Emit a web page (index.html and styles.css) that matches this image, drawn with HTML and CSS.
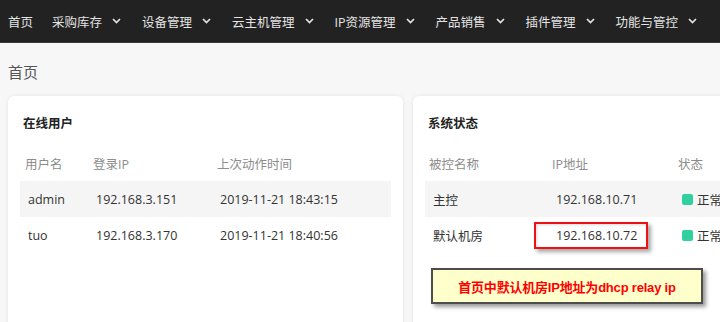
FILE: index.html
```html
<!DOCTYPE html>
<html lang="zh-CN">
<head>
  <meta charset="UTF-8">
  <title>首页</title>
  <link rel="stylesheet" href="styles.css">
</head>
<body>

  <nav class="topbar">
    <a class="nav-item first">首页</a>
    <a class="nav-item">采购库存<svg class="chev" viewBox="0 0 9 6"><path d="M1 1l3.5 3.5L8 1"/></svg></a>
    <a class="nav-item">设备管理<svg class="chev" viewBox="0 0 9 6"><path d="M1 1l3.5 3.5L8 1"/></svg></a>
    <a class="nav-item">云主机管理<svg class="chev" viewBox="0 0 9 6"><path d="M1 1l3.5 3.5L8 1"/></svg></a>
    <a class="nav-item">IP资源管理<svg class="chev" viewBox="0 0 9 6"><path d="M1 1l3.5 3.5L8 1"/></svg></a>
    <a class="nav-item">产品销售<svg class="chev" viewBox="0 0 9 6"><path d="M1 1l3.5 3.5L8 1"/></svg></a>
    <a class="nav-item">插件管理<svg class="chev" viewBox="0 0 9 6"><path d="M1 1l3.5 3.5L8 1"/></svg></a>
    <a class="nav-item">功能与管控<svg class="chev" viewBox="0 0 9 6"><path d="M1 1l3.5 3.5L8 1"/></svg></a>
  </nav>

  <h2 class="page-title">首页</h2>

  <main class="panels">
    <section class="card">
      <h3 class="card-title">在线用户</h3>
      <div class="table users">
        <div class="row head"><span>用户名</span><span>登录IP</span><span>上次动作时间</span></div>
        <div class="row stripe"><span>admin</span><span>192.168.3.151</span><span>2019-11-21 18:43:15</span></div>
        <div class="row"><span>tuo</span><span>192.168.3.170</span><span>2019-11-21 18:40:56</span></div>
      </div>
    </section>

    <section class="card">
      <h3 class="card-title">系统状态</h3>
      <div class="table nodes">
        <div class="row head"><span>被控名称</span><span>IP地址</span><span>状态</span></div>
        <div class="row stripe"><span>主控</span><span>192.168.10.71</span><span class="status"><i class="dot"></i>正常</span></div>
        <div class="row"><span>默认机房</span><span><span class="marked">192.168.10.72</span></span><span class="status"><i class="dot"></i>正常</span></div>
      </div>
      <div class="note">首页中默认机房IP地址为dhcp relay ip</div>
    </section>
  </main>

</body>
</html>
```

FILE: styles.css
```css
body {
  margin: 0;
  font-family: "Open Sans", "Noto Sans CJK SC", sans-serif;
  font-size: 12.5px;
  color: #333;
  background-color: #f7f7f7;
  overflow: hidden;
}

.topbar {
  height: 42px;
  background-color: #222;
  display: flex;
  align-items: center;
  gap: 21px;
  padding-left: 8px;
  border-bottom: 1px solid #3a3a3a;
  white-space: nowrap;
}

.nav-item {
  color: #e4e4e4;
  display: flex;
  align-items: center;
}

.nav-item.first {
  margin-right: -2px;
}

.chev {
  width: 9px;
  height: 6px;
  margin-left: 10px;
  fill: none;
  stroke: #e4e4e4;
  stroke-width: 1.7;
}

.page-title {
  margin: 0;
  padding: 18px 8px 0;
  height: 35px;
  font-size: 15px;
  font-weight: normal;
  line-height: 22px;
  color: #555;
}

.panels {
  display: grid;
  grid-template-columns: 395px 395px;
  gap: 10px;
  padding: 0 8px;
}

.card {
  background-color: #fff;
  border-radius: 6px;
  box-shadow: 0 0 4px rgba(0,0,0,0.08);
  padding: 18px 12px 0;
  height: 260px;
}

.card-title {
  margin: 0 0 11px 3px;
  font-size: 12.5px;
  line-height: 20px;
  font-weight: bold;
  color: #222;
}

.row {
  display: grid;
  height: 36px;
  align-items: center;
  padding-left: 8px;
  white-space: nowrap;
}

.users .row {
  grid-template-columns: 68px 124px 1fr;
}

.nodes .row {
  grid-template-columns: 123px 126px 1fr;
}

.row.head {
  color: #8c8c8c;
  padding-left: 5px;
}

.nodes .row.head {
  padding-left: 4px;
}

.row.stripe {
  background-color: #f5f5f5;
}

.status {
  display: flex;
  align-items: center;
}

.dot {
  width: 11px;
  height: 11px;
  border-radius: 2px;
  background-color: #30d19e;
  margin-right: 4px;
}

.marked {
  position: relative;
}

.marked::before {
  content: "";
  position: absolute;
  left: -22px;
  right: -11px;
  top: -5px;
  bottom: -5px;
  border: 2px solid #ee1111;
  box-shadow: 3px 3px 4px rgba(0,0,0,0.35), inset 1px 1px 3px rgba(0,0,0,0.15);
}

.note {
  margin: 15px 0 0 6px;
  width: 268px;
  height: 32px;
  border: 2px solid #4d4d4d;
  background-color: #ffffcc;
  box-shadow: 3px 3px 4px rgba(0,0,0,0.4);
  display: flex;
  align-items: center;
  justify-content: center;
  font-family: "Liberation Sans", "Noto Sans CJK SC", sans-serif;
  font-size: 13px;
  font-weight: bold;
  letter-spacing: -0.2px;
  color: #ff0000;
}
```
